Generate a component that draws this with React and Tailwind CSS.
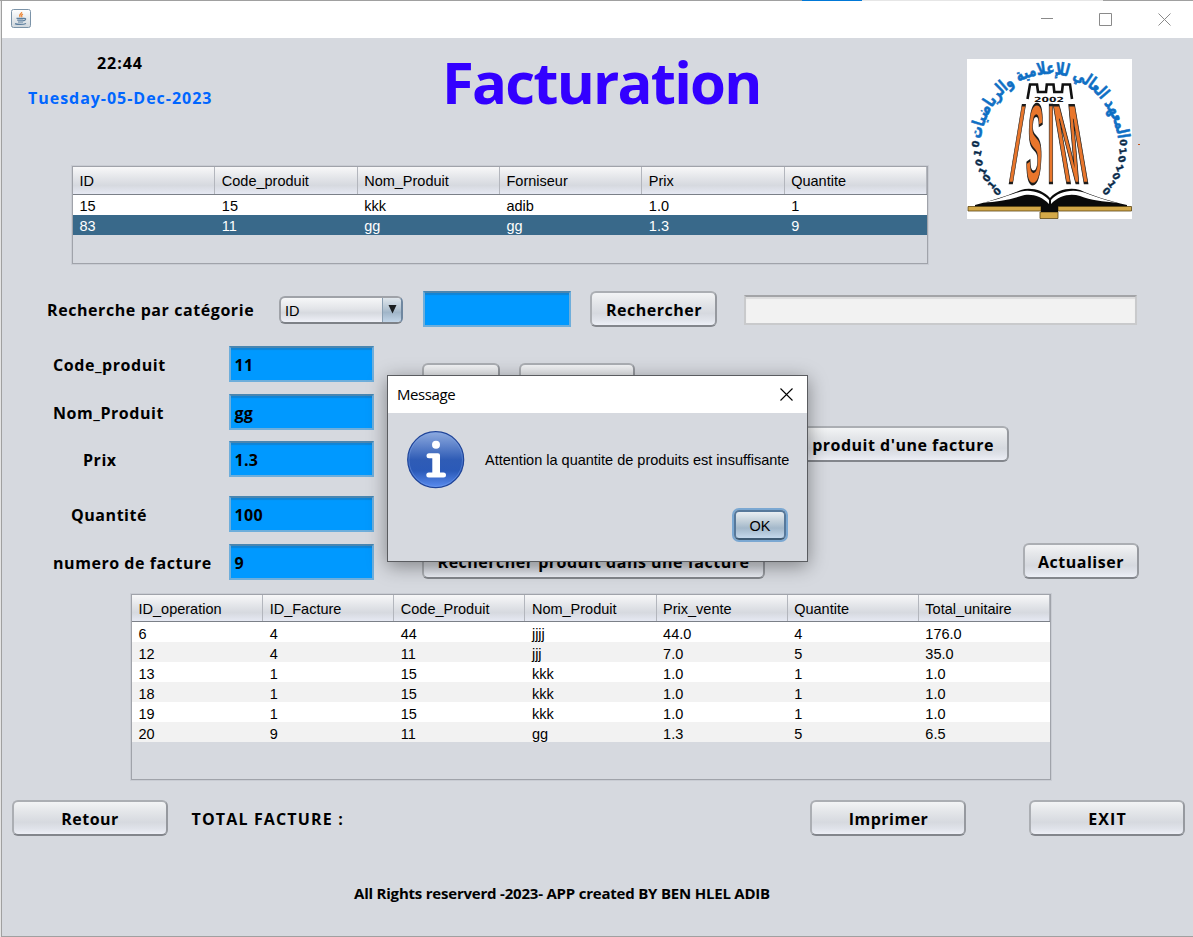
const BOLD = "font-['Open_Sans','Noto_Sans',sans-serif] font-bold text-black whitespace-pre text-[16px] leading-5";
const ARIAL = "font-['Liberation_Sans',Arial,sans-serif] text-[14.5px] leading-4";

function Button({ className = "", tracking = "tracking-[0.5px]", children }) {
  return (
    <button
      type="button"
      className={`flex h-9 shrink-0 items-center justify-center rounded-[6px] border-2 border-[#abaeb3] border-r-[#96999f] border-b-[#83868c] bg-[linear-gradient(180deg,#f6f7f8_0%,#e5e7ea_30%,#d6d9df_62%,#e0e3ea_80%,#f2f4fb_100%)] bg-origin-border pt-0.5 pl-px ${className}`}
    >
      <span className={`${BOLD} ${tracking}`}>{children}</span>
    </button>
  );
}

function Field({ value = "", className = "" }) {
  return (
    <div
      className={`flex h-9 shrink-0 items-center border-2 border-[#6eaedb] border-t-[#4a86b0] bg-[#0099ff] pt-0.5 pl-[3.5px] shadow-[inset_0_2px_1px_#0f84d6] ${className}`}
    >
      <span className={`${BOLD} tracking-[0.3px]`}>{value}</span>
    </div>
  );
}

function FormRow({ label, value, indent, className = "" }) {
  return (
    <div className={`flex items-center ${className}`}>
      <div className={`w-[227px] pt-0.5 ${indent}`}>
        <span className={`${BOLD} tracking-[0.55px]`}>{label}</span>
      </div>
      <Field value={value} className="w-[145px]" />
    </div>
  );
}

function Table({ head, rows, cols, selected, headClass, headPad = "", cellPad, className }) {
  return (
    <div className={`border border-[#a0a3aa] shadow-[0_0_0_1px_#c9ccd3] text-black ${ARIAL} ${className}`}>
      <div
        className={`grid border-b border-[#7b8088] bg-[linear-gradient(180deg,#f8f8f9_0%,#e3e5e9_40%,#d6d9df_68%,#e6e9f3_100%)] ${cols} ${headClass}`}
      >
        {head.map((h) => (
          <div key={h} className={`flex items-center border-r border-[#b3b6bd] pl-[6.5px] ${headPad}`}>
            {h}
          </div>
        ))}
      </div>
      {rows.map((r, i) => (
        <div
          key={i}
          className={`grid h-5 ${cols} ${i === selected ? "bg-[#39698a] text-white" : i % 2 ? "bg-[#f2f2f2]" : "bg-white"}`}
        >
          {r.map((c, j) => (
            <div key={j} className={`flex items-center pl-[6.5px] ${cellPad}`}>
              {c}
            </div>
          ))}
        </div>
      ))}
    </div>
  );
}

function JavaIcon() {
  return (
    <svg width="20" height="19" viewBox="0 0 20 19" fill="none" className="mb-0.5 block">
      <defs>
        <linearGradient id="jv" x1="0" y1="0" x2="0" y2="1">
          <stop offset="0" stopColor="#ffffff" />
          <stop offset="1" stopColor="#cfd6dc" />
        </linearGradient>
      </defs>
      <rect x="0.5" y="0.5" width="19" height="18" rx="2" fill="url(#jv)" stroke="#7b93a8" />
      <path d="M10.6 3c.6 1.6-3.4 2.5-1.4 5M12 5.2c-2 .8-1.6 1.6-1 3" stroke="#ee8a3c" strokeWidth="1.3" />
      <path d="M5.5 9.3h7.5M6.2 11.2h6.2M7 13h5M13 9.5c2.5-.6 2 1.8-.8 2.4" stroke="#5d7f9e" strokeWidth="1.2" />
      <path d="M4 14.6c2 1.1 8.5 1.1 11-.1" stroke="#5d7f9e" strokeWidth="1.2" />
    </svg>
  );
}

const BITS = [
  [8.5, 85, -82, "0"], [10.5, 94, -75, "1"], [12, 103.5, -68, "0"], [15.5, 112, -62, "1"],
  [19.5, 119, -55, "0"], [24.5, 126, -48, "1"], [30, 132.5, -42, "0"],
  [156.5, 83.5, 86, "0"], [156, 92, 80, "1"], [155, 100, 75, "0"], [153, 109, 68, "1"],
  [149.5, 117, 62, "0"], [145, 125, 55, "1"], [139.5, 132, 45, "0"],
];

function Logo() {
  return (
    <svg width="165" height="160" viewBox="0 0 165 160" className="block shrink-0 bg-white">
      <defs>
        <path id="arch" d="M13 92A69.5 77 0 0 1 152 92" />
      </defs>
      <text fontFamily="DejaVu Sans" fontWeight="700" fontSize="17" fill="#0f6fc4" stroke="#0f6fc4" strokeWidth="0.6" textAnchor="middle">
        <textPath href="#arch" startOffset="50%" textLength="206" lengthAdjust="spacingAndGlyphs">
          المعهد العالي للإعلامية والرياضيات
        </textPath>
      </text>
      {BITS.map(([x, y, a, c], i) => (
        <text
          key={i}
          transform={`translate(${x} ${y}) rotate(${a})`}
          y="3.5"
          textAnchor="middle"
          fontFamily="DejaVu Sans"
          fontWeight="700"
          fontSize="9.5"
          fill="#0b2036"
          stroke="#14456f"
          strokeWidth="0.5"
        >
          {c}
        </text>
      ))}
      <path d="M60.5 40L63 25.5H70L71 33H79L79.8 25.5H86.5L87.3 33H95L95.8 25.5H103L105 40" fill="none" stroke="#111" strokeWidth="2.6" />
      <text x="82" y="42.5" textAnchor="middle" fontFamily="DejaVu Sans" fontWeight="700" fontSize="7" textLength="30" lengthAdjust="spacingAndGlyphs" fill="#111">
        2002
      </text>
      <g fontFamily="Liberation Sans" fontWeight="700" fontSize="113" fill="#e8762c" stroke="#1c1c1c" strokeWidth="2.6">
        <text transform="matrix(0.22 0 -0.165 1 40.5 124)">I</text>
        <text transform="matrix(0.21 0 -0.05 1 58 124)">S</text>
        <text transform="matrix(0.22 0 0 1 80.500 124)">I</text>
        <text transform="matrix(0.27 0 0.17 1 97.5 124)">M</text>
      </g>
      <path d="M8 146C24 142 42 136 54 131C64 128 76 131 83 139C90 131 102 128 113 131C126 137 142 142 160 146V148H8Z" fill="#0a0a0a" />
      <path d="M16 143.5C32 141 44 135 54 132.5C64 130 76 134 82 141V145C74 136 62 134 54 137C42 141 30 143 16 143.5Z" fill="#fff" />
      <path d="M150 143.5C134 141 124 135 113 132.5C102 130 90 134 84 141V145C92 136 104 134 113 137C124 141 136 143 150 143.5Z" fill="#fff" />
      <path d="M1 147.5H74V152H1ZM91 147.5H164.5V152H91ZM73 153H91V159.5H73Z" fill="#d3a848" stroke="#5b4514" strokeWidth="0.8" />
      <path d="M74 146H91V153H74Z" fill="#0a0a0a" />
    </svg>
  );
}

function InfoIcon() {
  return (
    <svg width="58" height="58" viewBox="0 0 58 58" className="block shrink-0">
      <defs>
        <linearGradient id="inf" x1="0" y1="0" x2="0" y2="1">
          <stop offset="0" stopColor="#8fabdf" />
          <stop offset="0.5" stopColor="#2f5cb6" />
          <stop offset="0.7" stopColor="#2b5ab8" />
          <stop offset="1" stopColor="#5a8cf0" />
        </linearGradient>
      </defs>
      <circle cx="28.7" cy="28.7" r="28" fill="url(#inf)" stroke="#1f4499" strokeWidth="1.2" />
      <circle cx="28.7" cy="28.7" r="26.8" fill="none" stroke="#7ea4ea" strokeOpacity="0.5" strokeWidth="0.8" />
      <circle cx="29" cy="13.7" r="4" fill="#fff" />
      <path d="M22 22.3H31a2 2 0 0 1 2 2V41.5H36.5a2.5 2.5 0 0 1 0 5H21.8a2.5 2.5 0 0 1 0-5H25.3V27.3H22a2.5 2.5 0 0 1 0-5Z" fill="#fff" />
    </svg>
  );
}

function Dialog() {
  return (
    <div className="absolute top-[375px] left-[387px] flex h-[187px] w-[421px] flex-col border border-[#5a5c60] bg-[#d6d9df] shadow-[0_4px_18px_rgba(0,0,0,0.4)]">
      <div className="flex h-[37px] items-center justify-between bg-white pr-[14px] pl-[9px]">
        <span className="mb-0.5 font-['Open_Sans',sans-serif] text-[15px] leading-5 tracking-[-0.4px] text-black">Message</span>
        <svg width="13" height="13" viewBox="0 0 13 13" className="block" stroke="#000" strokeWidth="1.1">
          <path d="M0.5 0.5L12.5 12.5M12.5 0.5L0.5 12.5" />
        </svg>
      </div>
      <div className="flex items-center gap-5 pt-[18px] pl-[19px]">
        <InfoIcon />
        <span className={`${ARIAL} whitespace-pre text-black`}>Attention la quantite de produits est insuffisante</span>
      </div>
      <div className="mt-[21px] flex justify-end pr-[21px]">
        <button
          type="button"
          className={`flex h-[30px] w-[52px] items-center justify-center rounded-[5px] border-2 border-[#57789a] border-b-[#3f5b75] bg-[linear-gradient(180deg,#e9eef2_0%,#c3d0da_35%,#a3b8ca_62%,#c4d8ec_100%)] pt-px text-black shadow-[0_0_0_2px_#7ba8d2] ${ARIAL}`}
        >
          OK
        </button>
      </div>
    </div>
  );
}

export default function App() {
  return (
    <div className="relative flex h-[937px] w-[1193px] flex-col overflow-hidden bg-[#e4e4e4]">
      <div className="flex h-px shrink-0">
        <div className="w-[802px] bg-[#a0a0a0]" />
        <div className="w-[60px] bg-[#0078d7]" />
        <div className="w-[241px] bg-[#e6e6e6]" />
        <div className="grow bg-[#a0a0a0]" />
      </div>
      <div className="ml-px flex grow flex-col border-b border-l border-[#a0a0a0] bg-[#d6d9df]">
        <div className="flex h-[37px] shrink-0 items-center justify-between bg-white pr-[22px] pl-[9px]">
          <JavaIcon />
          <svg width="130" height="13" viewBox="0 0 130 13" className="block" fill="none" stroke="#8a8a8a">
            <path d="M0 5.5H12M58.5 0.5H70.5V12.5H58.5Z" />
            <path d="M117.5 0.5L129.5 12.5M129.5 0.5L117.5 12.5" />
          </svg>
        </div>

        <div className="flex h-[226px] shrink-0">
          <div className="w-[965px]">
            <div className="flex h-32">
              <div className="flex w-[440px] flex-col items-start gap-[15px] pt-[15px] pl-[26px]">
                <span className={`${BOLD} ml-[69px] tracking-[0.95px]`}>22:44</span>
                <span className="font-['Open_Sans',sans-serif] text-[16px] leading-5 font-bold tracking-[0.97px] text-[#0066ff]">
                  Tuesday-05-Dec-2023
                </span>
              </div>
              <h1 className="pt-[14px] font-['Open_Sans',sans-serif] text-[58px] leading-[60px] font-bold tracking-[-1.8px] text-[#3300ff]">
                Facturation
              </h1>
            </div>
            <Table
              className="ml-[70px] h-[98px] w-[856px]"
              cols="grid-cols-6"
              headClass="h-7"
              cellPad="pt-0.5"
              selected={1}
              head={["ID", "Code_produit", "Nom_Produit", "Forniseur", "Prix", "Quantite"]}
              rows={[
                ["15", "15", "kkk", "adib", "1.0", "1"],
                ["83", "11", "gg", "gg", "1.3", "9"],
              ]}
            />
          </div>
          <div className="flex items-start pt-[21px]">
            <Logo />
            <div className="mt-[85px] ml-1.5 h-px w-0.5 bg-[#c0561c]" />
          </div>
        </div>

        <div className="mt-[27px] flex h-9 shrink-0 items-center pl-[45px]">
          <span className={`${BOLD} w-[232px] pt-0.5 tracking-[0.58px]`}>Recherche par catégorie</span>
          <div className="mt-0.5 flex h-7 w-[124px] overflow-hidden rounded-[6px] border-2 border-[#9fa2a8] border-r-[#6f87a0] border-b-[#7d8187] bg-[linear-gradient(180deg,#f6f7f8_0%,#e2e4e8_45%,#d6d9df_62%,#eff1f8_100%)]">
            <span className={`${ARIAL} grow self-center pt-0.5 pl-1 text-black`}>ID</span>
            <div className="flex w-[19px] items-start justify-center border-l border-[#8a9fb2] bg-[linear-gradient(180deg,#dfe6ec_0%,#b4c4d2_45%,#a0b5c8_60%,#c2d5e8_100%)] pt-[7px]">
              <svg width="9" height="9" viewBox="0 0 9 9" className="block">
                <path d="M0.5 0H8.5L4.5 8.5Z" fill="#1a1d20" />
              </svg>
            </div>
          </div>
          <Field className="ml-5 w-[148px]" />
          <Button className="ml-[19px] w-[127px]">Rechercher</Button>
          <div className="mt-0.5 ml-[27px] h-[30px] w-[393px] border-2 border-[#c9cacc] border-t-[#a3a4a7] bg-[#f2f2f2] shadow-[inset_0_2px_1px_#dcdcdd]" />
        </div>

        <div className="mt-[19px] flex h-[248px] shrink-0">
          <div className="flex w-[419.5px] flex-col">
            <FormRow label="Code_produit" value="11" indent="pl-[51px]" />
            <FormRow label="Nom_Produit" value="gg" indent="pl-[51px]" className="mt-3" />
            <FormRow label="Prix" value="1.3" indent="pl-[81px]" className="mt-[11px]" />
            <FormRow label="Quantité" value="100" indent="pl-[69px]" className="mt-[19px]" />
            <FormRow label="numero de facture" value="9" indent="pl-[51px]" className="mt-3" />
          </div>
          <div className="flex grow flex-col pt-[17px]">
            <div className="flex gap-[19px]">
              <Button className="w-[78px]">Ajout</Button>
              <Button className="w-[116px]">Annuller</Button>
            </div>
            <Button className="mt-[27px] ml-[375px] w-[212px]">produit d'une facture</Button>
            <div className="mt-[81px] flex">
              <Button className="w-[343px]">Rechercher produit dans une facture</Button>
              <Button className="ml-[258px] w-[116px]">Actualiser</Button>
            </div>
          </div>
        </div>

        <Table
          className="ml-[129px] h-[186px] w-[920px] shrink-0"
          cols="grid-cols-7"
          headClass="h-[27px]"
          headPad="pt-0.5"
          cellPad="pt-1"
          head={["ID_operation", "ID_Facture", "Code_Produit", "Nom_Produit", "Prix_vente", "Quantite", "Total_unitaire"]}
          rows={[
            ["6", "4", "44", "jjjj", "44.0", "4", "176.0"],
            ["12", "4", "11", "jjj", "7.0", "5", "35.0"],
            ["13", "1", "15", "kkk", "1.0", "1", "1.0"],
            ["18", "1", "15", "kkk", "1.0", "1", "1.0"],
            ["19", "1", "15", "kkk", "1.0", "1", "1.0"],
            ["20", "9", "11", "gg", "1.3", "5", "6.5"],
          ]}
        />

        <div className="mt-5 flex h-9 shrink-0 items-center pl-[9.5px]">
          <Button className="w-[156px]">Retour</Button>
          <span className={`${BOLD} ml-6 w-[618.5px] pt-0.5 tracking-[1.15px]`}>TOTAL FACTURE :</span>
          <Button className="w-[156px]">Imprimer</Button>
          <Button className="ml-[63px] w-[156px]" tracking="tracking-[1.1px]">EXIT</Button>
        </div>

        <p className="mt-[47px] ml-[352px] font-['Open_Sans',sans-serif] text-[15px] leading-5 font-bold tracking-[-0.21px] whitespace-pre text-black">
          All Rights reserverd -2023- APP created BY BEN HLEL ADIB
        </p>
      </div>
      <Dialog />
    </div>
  );
}
